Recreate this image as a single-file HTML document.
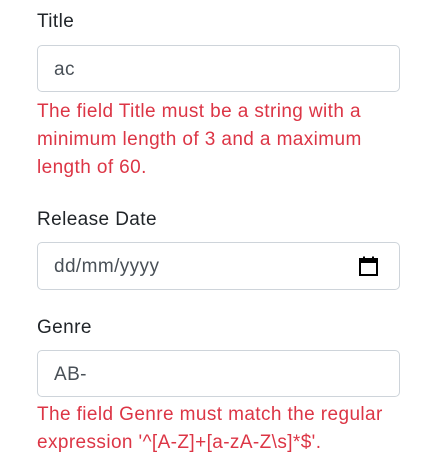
<!DOCTYPE html>
<html><head><style>
body{margin:0;background:#fff;font-family:"Liberation Sans",sans-serif;font-size:19px;letter-spacing:0.4px;color:#212529;}
.l{position:absolute;left:37px;white-space:nowrap;line-height:28px;}
.in{position:absolute;left:37px;width:363px;border:1px solid #ced4da;border-radius:5px;box-sizing:border-box;}
.in span{position:absolute;left:16px;top:50%;transform:translateY(-45%);color:#495057;}
.e{position:absolute;left:37px;color:#dc3545;line-height:28px;white-space:nowrap;}
</style></head><body>
<div class="l" style="top:8px">Title</div>
<div class="in" style="top:45px;height:47px"><span>ac</span></div>
<div class="e" style="top:98px">The field Title must be a string with a<br>minimum length of 3 and a maximum<br>length of 60.</div>
<div class="l" style="top:206px">Release Date</div>
<div class="in" style="top:242px;height:48px"><span>dd/mm/yyyy</span>
<svg style="position:absolute;left:320px;top:13px" width="21" height="21" viewBox="0 0 21 21"><rect x="2" y="3" width="17" height="16" fill="none" stroke="#000" stroke-width="2"/><rect x="2" y="3" width="17" height="4" fill="#000"/><rect x="5" y="0.5" width="2" height="4" fill="#000"/><rect x="14" y="0.5" width="2" height="4" fill="#000"/></svg></div>
<div class="l" style="top:314px">Genre</div>
<div class="in" style="top:350px;height:47px"><span>AB-</span></div>
<div class="e" style="top:401px">The field Genre must match the regular<br>expression '^[A-Z]+[a-zA-Z\s]*$'.</div>
</body></html>
